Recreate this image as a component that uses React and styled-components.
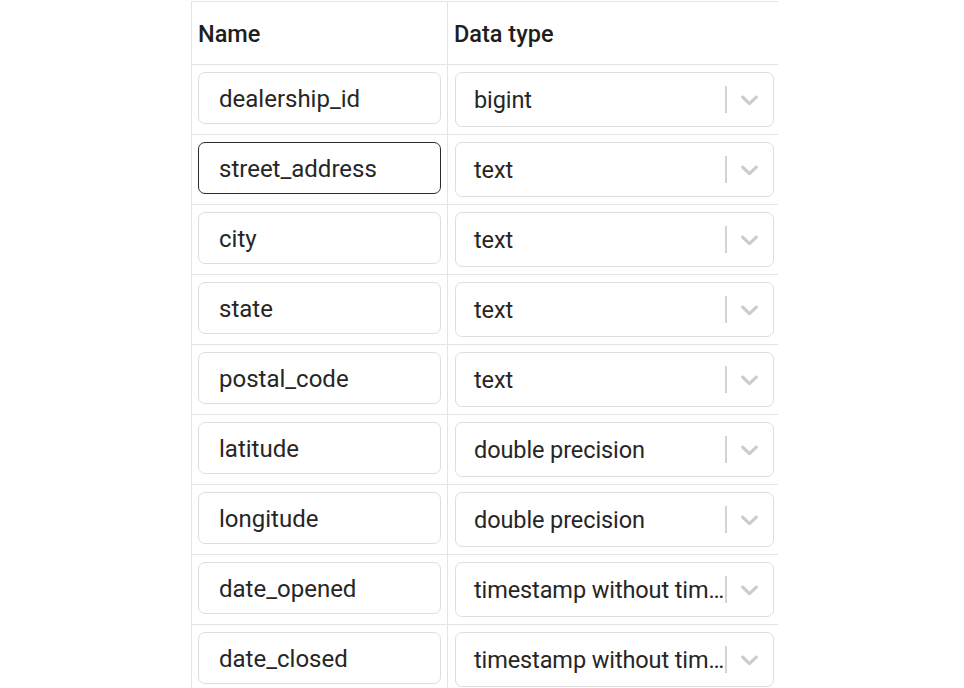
import React from 'react';
import styled, { createGlobalStyle } from 'styled-components';

const columns = [
  { name: 'dealership_id', type: 'bigint' },
  { name: 'street_address', type: 'text', focused: true },
  { name: 'city', type: 'text' },
  { name: 'state', type: 'text' },
  { name: 'postal_code', type: 'text' },
  { name: 'latitude', type: 'double precision' },
  { name: 'longitude', type: 'double precision' },
  { name: 'date_opened', type: 'timestamp without time zone' },
  { name: 'date_closed', type: 'timestamp without time zone' },
];

const GlobalStyle = createGlobalStyle`
  html, body {
    margin: 0;
    padding: 0;
    background: #ffffff;
    overflow: hidden;
  }
  body {
    font-family: Roboto, "Liberation Sans", Arial, sans-serif;
    color: #262626;
  }
`;

const Page = styled.div`
  padding: 1px 0 0 191px;
  width: 964px;
  height: 688px;
  box-sizing: border-box;
`;

const Table = styled.table`
  width: 586px;
  border-collapse: collapse;
  table-layout: fixed;
  border-left: 1px solid #e4e4e4;
  border-top: 1px solid #e4e4e4;
`;

const HeadCell = styled.th`
  height: 63px;
  padding: 1px 0 0 6px;
  text-align: left;
  vertical-align: middle;
  font-size: 23.5px;
  font-weight: 500;
  color: #1e1e1e;
  border-bottom: 1px solid #e4e4e4;
  border-right: ${({ $divider }) => ($divider ? '1px solid #e4e4e4' : 'none')};
  width: ${({ $width }) => $width}px;
  box-sizing: border-box;
`;

const Cell = styled.td`
  height: 70px;
  padding: 7px ${({ $right }) => $right}px 0 ${({ $left }) => $left}px;
  vertical-align: top;
  border-bottom: 1px solid #e4e4e4;
  border-right: ${({ $divider }) => ($divider ? '1px solid #e4e4e4' : 'none')};
  box-sizing: border-box;
`;

const NameInput = styled.div`
  height: 52px;
  box-sizing: border-box;
  border: 1px solid ${({ $focused }) => ($focused ? '#2b2b2b' : '#dedede')};
  border-radius: 7px;
  padding: 1px 0 0 20px;
  display: flex;
  align-items: center;
  font-size: 24px;
  color: #262626;
  white-space: nowrap;
  overflow: hidden;
`;

const Select = styled.div`
  height: 55px;
  box-sizing: border-box;
  border: 1px solid #dedede;
  border-radius: 7px;
  display: flex;
  align-items: center;
`;

const Value = styled.div`
  flex: 1;
  min-width: 0;
  margin-right: -3px;
  padding: 1px 0 0 18px;
  font-size: 23.5px;
  letter-spacing: -0.1px;
  color: #262626;
  white-space: nowrap;
  overflow: hidden;
  text-overflow: ellipsis;
`;

const Separator = styled.span`
  position: relative;
  align-self: stretch;
  width: 2px;
  margin: 13px 0;
  background: #d4d4d4;
`;

const Indicator = styled.div`
  display: flex;
  align-items: center;
  padding: 0 9px 0 8px;
  color: #cccccc;
  svg {
    width: 29px;
    height: 29px;
    fill: currentColor;
  }
`;

const Chevron = () => (
  <svg viewBox='0 0 20 20' aria-hidden='true'>
    <path d='M4.516 7.548c0.436-0.446 1.043-0.481 1.576 0l3.908 3.747 3.908-3.747c0.533-0.481 1.141-0.446 1.574 0 0.436 0.445 0.408 1.197 0 1.615-0.406 0.418-4.695 4.502-4.695 4.502-0.217 0.223-0.502 0.335-0.787 0.335s-0.57-0.112-0.789-0.335c0 0-4.287-4.084-4.695-4.502s-0.436-1.17 0-1.615z' />
  </svg>
);

export default function App() {
  return (
    <Page>
      <GlobalStyle />
      <Table>
        <thead>
          <tr>
            <HeadCell $divider $width={256}>Name</HeadCell>
            <HeadCell $width={330}>Data type</HeadCell>
          </tr>
        </thead>
        <tbody>
          {columns.map((col) => (
            <tr key={col.name}>
              <Cell $divider $left={6} $right={6}>
                <NameInput $focused={col.focused}>{col.name}</NameInput>
              </Cell>
              <Cell $left={7} $right={4}>
                <Select>
                  <Value title={col.type}>{col.type}</Value>
                  <Separator />
                  <Indicator>
                    <Chevron />
                  </Indicator>
                </Select>
              </Cell>
            </tr>
          ))}
        </tbody>
      </Table>
    </Page>
  );
}
